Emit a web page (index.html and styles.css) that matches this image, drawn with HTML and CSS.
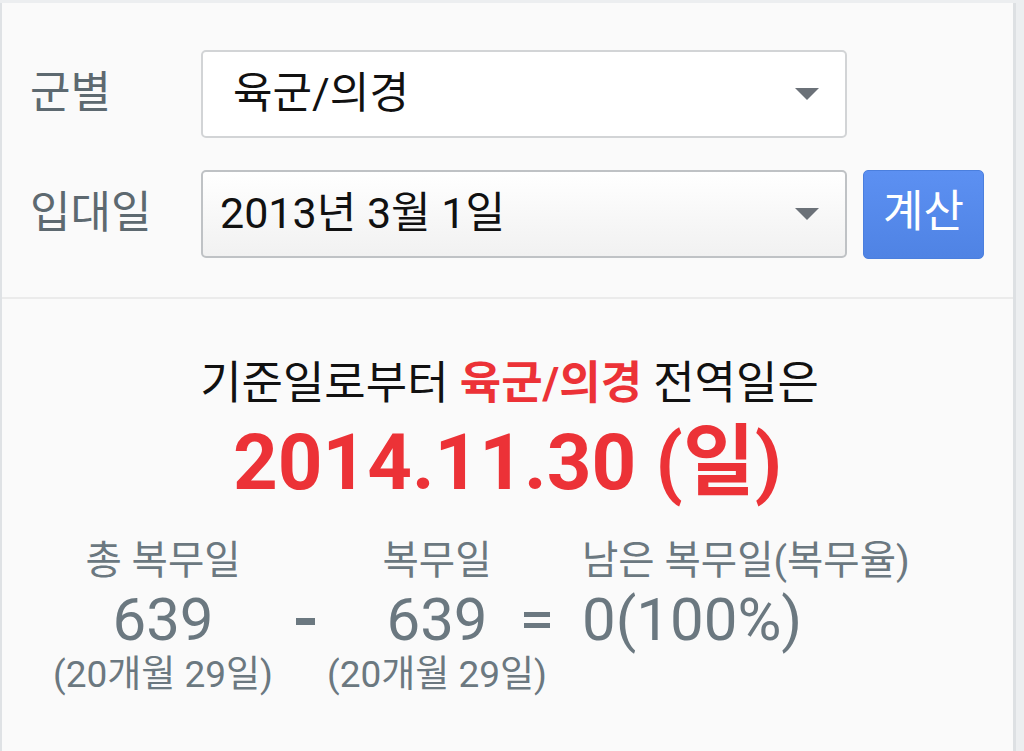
FILE: index.html
```html
<!DOCTYPE html>
<html lang="ko">
<head>
<meta charset="utf-8">
<title>전역일 계산기</title>
<link rel="stylesheet" href="styles.css">
</head>
<body>
<div class="panel">
  <div class="form">
    <div class="row">
      <div class="label">군별</div>
      <div class="select select-plain">
        <span class="value value-wide">육군/의경</span>
        <span class="arrow"></span>
      </div>
    </div>
    <div class="row">
      <div class="label">입대일</div>
      <div class="select select-date">
        <span class="value">2013년 3월 1일</span>
        <span class="arrow"></span>
      </div>
      <div class="button">계산</div>
    </div>
  </div>
  <div class="divider"></div>
  <div class="result">
    <div class="lead">기준일로부터 <strong class="red">육군/의경</strong> 전역일은</div>
    <div class="date">2014.11.30 (일)</div>
    <div class="stats">
      <div class="col col1">
        <div class="s-label">총 복무일</div>
        <div class="s-num">639</div>
        <div class="s-sub">(20개월 29일)</div>
      </div>
      <div class="op op1">
        <div class="s-label"></div>
        <div class="s-num"><span class="dash"></span></div>
      </div>
      <div class="col col2">
        <div class="s-label">복무일</div>
        <div class="s-num">639</div>
        <div class="s-sub">(20개월 29일)</div>
      </div>
      <div class="op op2">
        <div class="s-label"></div>
        <div class="s-num"><span class="eq"></span></div>
      </div>
      <div class="col col3">
        <div class="s-label">남은 복무일(복무율)</div>
        <div class="s-num">0(100%)</div>
      </div>
    </div>
  </div>
</div>
</body>
</html>
```
FILE: styles.css
```css
html, body {
  margin: 0;
  padding: 0;
}
body {
  background: #eceef0;
  font-family: Roboto, "Noto Sans CJK KR", sans-serif;
  width: 1024px;
  height: 751px;
  overflow: hidden;
}
.panel {
  margin-top: 3px;
  width: 1011px;
  height: 748px;
  background: #fafafa;
  border-left: 2px solid #dfe2e5;
  border-right: 3px solid #dde0e3;
  box-sizing: content-box;
}
.form {
  padding: 47px 0 39px 28px;
  display: flex;
  flex-direction: column;
  gap: 32px;
}
.row {
  display: flex;
  align-items: center;
  height: 88px;
}
.label {
  width: 171px;
  font-size: 44px;
  color: #5d6970;
  line-height: 1;
  padding-bottom: 2px;
}
.select {
  width: 646px;
  height: 88px;
  box-sizing: border-box;
  border: 2px solid #d2d4d6;
  border-radius: 5px;
  background: #ffffff;
  display: flex;
  align-items: center;
  justify-content: space-between;
  padding: 0 26px 0 17px;
}
.select-date {
  border-color: #bfc2c5;
  background: linear-gradient(#ffffff, #f1f1f1);
}
.value {
  font-size: 43px;
  color: #111;
  line-height: 1;
  padding-bottom: 2px;
}
.value-wide {
  padding-left: 13px;
}
.arrow {
  width: 0;
  height: 0;
  border-left: 12px solid transparent;
  border-right: 12px solid transparent;
  border-top: 12px solid #6b7178;
}
.button {
  margin-left: 16px;
  width: 121px;
  height: 89px;
  box-sizing: border-box;
  border-radius: 5px;
  background: linear-gradient(#5c90f2, #4f83e4);
  border: 1px solid #4b7fde;
  color: #fff;
  font-size: 44px;
  line-height: 1;
  display: flex;
  align-items: center;
  justify-content: center;
  padding-bottom: 4px;
}
.divider {
  height: 2px;
  background: #ebebeb;
}
.result {
  padding-top: 58px;
}
.lead {
  text-align: center;
  font-size: 45px;
  line-height: 54px;
  color: #111;
  padding-left: 4px;
}
.red {
  color: #ec3237;
  font-weight: 700;
}
.date {
  text-align: center;
  font-size: 78px;
  font-weight: 700;
  color: #ec3237;
  line-height: 92px;
  margin-top: 6px;
}
.stats {
  display: flex;
  padding-left: 50px;
  margin-top: 26px;
  color: #6b7880;
}
.col {
  display: flex;
  flex-direction: column;
}
.col1 { width: 222px; align-items: center; }
.col2 { width: 174px; align-items: center; }
.col3 { align-items: flex-start; }
.op {
  display: flex;
  flex-direction: column;
}
.op1 { width: 54px; padding-left: 22px; }
.op2 { width: 58px; }
.s-label {
  font-size: 39.5px;
  line-height: 52px;
  height: 52px;
  white-space: nowrap;
}
.s-num {
  font-size: 60px;
  line-height: 66px;
  height: 66px;
  white-space: nowrap;
}
.op .s-num {
  display: flex;
  align-items: center;
}
.dash {
  display: block;
  width: 19px;
  height: 7px;
  background: #6b7880;
  margin-top: 2px;
}
.eq {
  display: block;
  width: 26px;
  height: 6px;
  border-top: 5px solid #6b7880;
  border-bottom: 5px solid #6b7880;
  margin-top: 0;
}
.s-sub {
  font-size: 37px;
  line-height: 44px;
  white-space: nowrap;
}
```
